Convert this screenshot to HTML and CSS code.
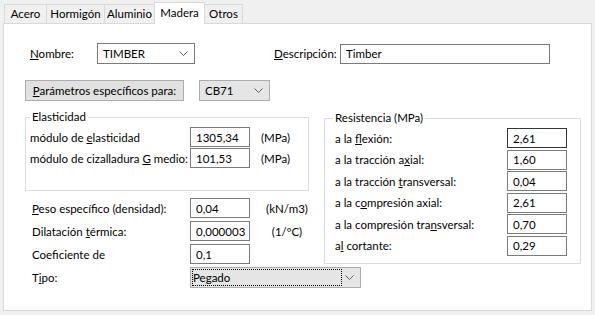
FILE: index.html
```html
<!DOCTYPE html>
<html lang="es">
<head>
    <meta charset="UTF-8">
    <title>Materiales - Madera</title>
    <link rel="stylesheet" href="styles.css">
</head>
<body>

    <!-- Tabs -->
    <div class="tabs">
        <div class="tab tab-acero">Acero</div>
        <div class="tab tab-hormigon">Hormigón</div>
        <div class="tab tab-aluminio">Aluminio</div>
        <div class="tab tab-madera active">Madera</div>
        <div class="tab tab-otros">Otros</div>
    </div>

    <div class="panel">

        <!-- Nombre / Descripción -->
        <div class="row name-row">
            <span class="name-label"><u>N</u>ombre:</span>
            <div class="combo name-combo">
                <span>TIMBER</span>
                <svg class="chev" width="9" height="5" viewBox="0 0 9 5"><polyline points="0.5,0.5 4.5,4.5 8.5,0.5"/></svg>
            </div>
            <span class="desc-label"><u>D</u>escripción:</span>
            <input class="text desc-input" type="text" value="Timber">
        </div>

        <!-- Parámetros -->
        <div class="row param-row">
            <button class="btn"><u>P</u>arámetros específicos para:</button>
            <div class="combo list cb-combo">
                <span>CB71</span>
                <svg class="chev" width="9" height="5" viewBox="0 0 9 5"><polyline points="0.5,0.5 4.5,4.5 8.5,0.5"/></svg>
            </div>
        </div>

        <div class="columns">
            <div class="col-left">
                <fieldset class="group elast">
                    <legend>Elasticidad</legend>
                    <div class="frow">
                        <span class="elabel">módulo de <u>e</u>lasticidad</span>
                        <input class="text num" type="text" value="1305,34">
                        <span class="eunit">(MPa)</span>
                    </div>
                    <div class="frow">
                        <span class="elabel">módulo de cizalladura <u>G</u> medio:</span>
                        <input class="text num" type="text" value="101,53">
                        <span class="eunit">(MPa)</span>
                    </div>
                </fieldset>

                <div class="props">
                    <div class="frow">
                        <span class="plabel"><u>P</u>eso específico (densidad):</span>
                        <input class="text num" type="text" value="0,04">
                        <span class="punit">(kN/m3)</span>
                    </div>
                    <div class="frow">
                        <span class="plabel">Dilatación <u>t</u>érmica:</span>
                        <input class="text num" type="text" value="0,000003">
                        <span class="punit">(1/ºC)</span>
                    </div>
                    <div class="frow">
                        <span class="plabel">Coeficiente de</span>
                        <input class="text num" type="text" value="0,1">
                    </div>
                    <div class="frow tipo-row">
                        <span class="plabel">T<u>i</u>po:</span>
                        <div class="combo list tipo-combo">
                            <span class="focus">Pegado</span>
                            <svg class="chev" width="9" height="5" viewBox="0 0 9 5"><polyline points="0.5,0.5 4.5,4.5 8.5,0.5"/></svg>
                        </div>
                    </div>
                </div>
            </div>

            <fieldset class="group resist">
                <legend>Resistencia (MPa)</legend>
                <div class="rrow">
                    <span class="rlabel">a la <u>f</u>lexión:</span>
                    <input class="text num active-field" type="text" value="2,61">
                </div>
                <div class="rrow">
                    <span class="rlabel">a la tracción a<u>x</u>ial:</span>
                    <input class="text num" type="text" value="1,60">
                </div>
                <div class="rrow">
                    <span class="rlabel">a la tracción <u>t</u>ransversal:</span>
                    <input class="text num" type="text" value="0,04">
                </div>
                <div class="rrow">
                    <span class="rlabel">a la c<u>o</u>mpresión axial:</span>
                    <input class="text num" type="text" value="2,61">
                </div>
                <div class="rrow">
                    <span class="rlabel">a la compresión tra<u>n</u>sversal:</span>
                    <input class="text num" type="text" value="0,70">
                </div>
                <div class="rrow">
                    <span class="rlabel">a<u>l</u> cortante:</span>
                    <input class="text num" type="text" value="0,29">
                </div>
            </fieldset>
        </div>

    </div>

</body>
</html>
```

FILE: styles.css
```css
body {
    margin: 0;
    background: #f0f0f0;
    font-family: "Segoe UI", Lato, "Liberation Sans", sans-serif;
    font-size: 11.5px;
    color: #000;
    white-space: nowrap;
}

u {
    text-underline-offset: 1px;
}

/* Tabs */
.tabs {
    display: flex;
    align-items: flex-end;
    height: 23px;
    padding-left: 4px;
}

.tab {
    box-sizing: border-box;
    height: 19px;
    line-height: 18px;
    border: 1px solid #d9d9d9;
    border-bottom: none;
    margin-left: -1px;
    text-align: center;
    background: #f0f0f0;
}

.tab:first-child {
    margin-left: 0;
}

.tab.active {
    position: relative;
    height: 22px;
    line-height: 19px;
    margin-bottom: -1px;
    background: #fff;
}

.tab-acero { width: 43px; }
.tab-hormigon { width: 59px; }
.tab-aluminio { width: 51px; }
.tab-madera { width: 51px; }
.tab-otros { width: 39px; }

/* Panel */
.panel {
    box-sizing: border-box;
    height: 288px;
    margin: 0 3px;
    border: 1px solid #d9d9d9;
    background: #fff;
    padding: 19px 0 0 21px;
}

.row {
    display: flex;
    align-items: center;
}

.name-row {
    height: 21px;
}

.name-label {
    width: 67px;
    margin-left: 5px;
}

.desc-label {
    width: 66px;
    margin-left: 79px;
}

.combo {
    box-sizing: border-box;
    display: flex;
    align-items: center;
    justify-content: space-between;
    height: 21px;
    padding: 0 6px 0 5px;
    border: 1px solid #7a7a7a;
    background: #fff;
}

.combo.list {
    border-color: #acacac;
    background: #e5e5e5;
}

.chev {
    flex: none;
    fill: none;
    stroke: #606060;
    stroke-width: 1;
}

.name-combo {
    width: 98px;
}

.text {
    box-sizing: border-box;
    height: 20px;
    margin: 0;
    padding: 0 0 0 5px;
    border: 1px solid #7a7a7a;
    font: inherit;
    color: #000;
    background: #fff;
    outline: none;
}

.desc-input {
    width: 210px;
}

.param-row {
    margin-top: 16px;
}

.btn {
    box-sizing: border-box;
    width: 159px;
    height: 21px;
    padding: 0;
    border: 1px solid #adadad;
    background: #e1e1e1;
    font: inherit;
    color: #000;
}

.cb-combo {
    width: 71px;
    margin-left: 15px;
}

/* Group boxes */
.columns {
    display: flex;
    align-items: flex-start;
    margin-top: 9px;
}

.col-left {
    flex: none;
    width: 284px;
}

.group {
    box-sizing: border-box;
    min-width: 0;
    margin: 0;
    border: 1px solid #dcdcdc;
}

.group legend {
    padding: 0 2px;
    line-height: 14px;
}

.frow,
.rrow {
    display: flex;
    align-items: center;
    height: 20px;
}

.elast {
    width: 284px;
    padding: 3px 0 22px 4px;
}

.elast .frow + .frow {
    margin-top: 1px;
}

.elabel {
    width: 160px;
}

.num {
    flex: none;
    width: 60px;
}

.eunit {
    margin-left: 11px;
}

.props {
    display: flex;
    flex-direction: column;
    gap: 3px;
    margin-top: 7px;
    padding-left: 7px;
}

.plabel {
    flex: none;
    width: 158px;
}

.punit {
    flex: none;
    width: 74px;
    text-align: center;
}

.tipo-row {
    height: 21px;
}

.tipo-combo {
    flex: none;
    width: 171px;
    padding: 0 6px 0 1px;
}

.focus {
    box-sizing: border-box;
    width: 150px;
    height: 17px;
    line-height: 15px;
    border: 1px dotted #000;
}

.resist {
    flex: none;
    width: 257px;
    margin-left: 15px;
    margin-top: 1px;
    padding: 3px 0 7px 8px;
}

.resist .rrow + .rrow {
    margin-top: 1.6px;
}

.rlabel {
    flex: none;
    width: 172px;
    padding-left: 2px;
}

.active-field {
    border-color: #333;
}
```
